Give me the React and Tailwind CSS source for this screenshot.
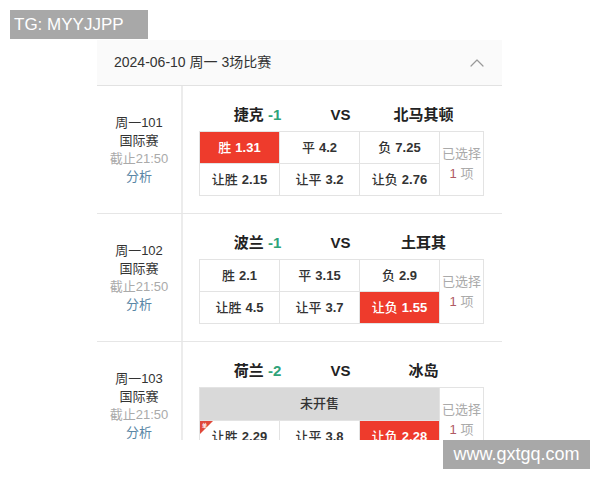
import React from 'react';
import { ChevronUp } from 'lucide-react';

const font = { fontFamily: '"Liberation Sans", "Noto Sans CJK SC", sans-serif' };

const matches = [
  {
    no: '周一101',
    home: '捷克',
    hcap: '-1',
    away: '北马其顿',
    odds: [
      [{ label: '胜', v: '1.31', on: true }, { label: '平', v: '4.2' }, { label: '负', v: '7.25' }],
      [{ label: '让胜', v: '2.15' }, { label: '让平', v: '3.2' }, { label: '让负', v: '2.76' }],
    ],
  },
  {
    no: '周一102',
    home: '波兰',
    hcap: '-1',
    away: '土耳其',
    odds: [
      [{ label: '胜', v: '2.1' }, { label: '平', v: '3.15' }, { label: '负', v: '2.9' }],
      [{ label: '让胜', v: '4.5' }, { label: '让平', v: '3.7' }, { label: '让负', v: '1.55', on: true }],
    ],
  },
  {
    no: '周一103',
    home: '荷兰',
    hcap: '-2',
    away: '冰岛',
    closed: true,
    odds: [
      [{ label: '让胜', v: '2.29', single: true }, { label: '让平', v: '3.8' }, { label: '让负', v: '2.28', on: true }],
    ],
  },
];

function OddCell({ cell }) {
  return (
    <div
      className={
        'relative flex h-[32px] w-[80px] items-center justify-center border-r border-b border-[#e3e3e3] text-[13px] font-bold ' +
        (cell.on ? 'bg-[#ee3b2c] text-white' : 'bg-white text-[#333]')
      }
    >
      {cell.single && (
        <svg className="absolute left-0 top-0" width="13" height="13" viewBox="0 0 13 13">
          <polygon points="0,0 13,0 0,13" fill="#e0483a" />
          <text x="2" y="6" fontSize="5" fill="#fff">单</text>
        </svg>
      )}
      <span className="font-medium">{cell.label}</span>
      <span className="ml-[4px]">{cell.v}</span>
    </div>
  );
}

function MatchRow({ m }) {
  return (
    <div className="flex h-[128px] shrink-0 border-b border-[#e6e6e6]">
      <div className="flex w-[86px] shrink-0 flex-col items-center justify-center border-r-2 border-[#ececec] text-[13px] leading-[18px] text-[#333]">
        <span>{m.no}</span>
        <span>国际赛</span>
        <span className="text-[#aaa]">截止21:50</span>
        <span className="text-[#5a87a6]">分析</span>
      </div>
      <div className="flex flex-col pl-[16px]">
        <div className="mt-[19px] flex h-[20px] items-center pl-[17px] text-[15px] font-bold text-[#222]">
          <div className="w-[83px] text-center">
            {m.home} <span className="text-[#2fa37a]">{m.hcap}</span>
          </div>
          <div className="w-[83px] text-center">VS</div>
          <div className="w-[83px] text-center">{m.away}</div>
        </div>
        <div className="mt-[6px] flex border-l border-t border-[#e3e3e3]">
          <div className="flex w-[240px] flex-col">
            {m.closed && (
              <div className="flex h-[33px] items-center justify-center border-r border-b border-[#e3e3e3] bg-[#d9d9d9] text-[13px] font-medium text-[#333]">
                未开售
              </div>
            )}
            {m.odds.map((row, i) => (
              <div key={i} className="flex">
                {row.map((c, j) => (
                  <OddCell key={j} cell={c} />
                ))}
              </div>
            ))}
          </div>
          <div className="flex h-[64px] w-[44px] flex-col items-center justify-center border-r border-b border-[#e3e3e3] text-[13px] leading-[20px] text-[#aaa]">
            <span>已选择</span>
            <span>
              <span className="text-[#b05a64]">1</span> 项
            </span>
          </div>
        </div>
      </div>
    </div>
  );
}

export default function App() {
  return (
    <div className="relative h-[480px] w-[600px] overflow-hidden bg-white" style={font}>
      <div className="ml-[97px] flex h-[440px] w-[405px] flex-col overflow-hidden pt-[40px]">
        <div className="flex h-[46px] shrink-0 items-center justify-between border-b border-[#e2e2e2] bg-[#fafafa] pl-[17px] pr-[13px]">
          <span className="text-[14px] text-[#333]">2024-06-10 周一 3场比赛</span>
          <ChevronUp size={24} strokeWidth={1.2} className="text-[#999]" />
        </div>
        {matches.map((m) => (
          <MatchRow key={m.no} m={m} />
        ))}
      </div>

      {/* watermarks */}
      <div className="absolute left-[10px] top-[10px] flex h-[29px] w-[138px] items-center bg-[#a8a8a8] pl-[4px] text-[17px] text-white">
        TG: MYYJJPP
      </div>
      <div className="absolute left-[443px] top-[440px] flex h-[29px] w-[147px] items-center justify-center bg-[#a8a8a8] text-[18px] text-white">
        www.gxtgq.com
      </div>
    </div>
  );
}
